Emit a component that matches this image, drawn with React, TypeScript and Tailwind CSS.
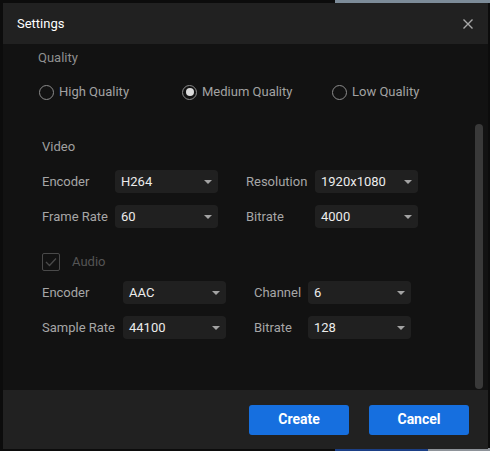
import React from "react";

const font = { fontFamily: "Roboto, 'Noto Sans', Arial, sans-serif" };

function Caret() {
  return (
    <svg width="8" height="4" viewBox="0 0 8 4" className="shrink-0">
      <path d="M0 0 L8 0 L4 4 Z" fill="#a3a3a3" />
    </svg>
  );
}

function Select({ value, w = "w-[103px]" }: { value: string; w?: string }) {
  return (
    <div className={`${w} h-[23px] rounded-[4px] bg-[#202020] flex items-center justify-between pl-[6px] pr-[6px] text-[13px] text-[#ececec]`}>
      <span>{value}</span>
      <Caret />
    </div>
  );
}

function Radio({ label, checked }: { label: string; checked?: boolean }) {
  return (
    <div className="flex items-center gap-[5px]">
      <div className="w-[15px] h-[15px] rounded-full border-[1.5px] border-[#8c8c8c] flex items-center justify-center">
        {checked && <div className="w-[8px] h-[8px] rounded-full bg-[#dcdcdc]" />}
      </div>
      <span className="text-[13px] text-[#a2a2a2]">{label}</span>
    </div>
  );
}

function Row({
  l1, v1, l2, v2, w1, w2,
}: { l1: string; v1: string; l2: string; v2: string; w1: string; w2: string }) {
  return (
    <div className="flex items-center">
      <span className={`${w1} text-[13px] text-[#a6a6a6]`}>{l1}</span>
      <Select value={v1} />
      <span className={`ml-[28px] ${w2} text-[13px] text-[#a6a6a6]`}>{l2}</span>
      <Select value={v2} />
    </div>
  );
}

export default function App() {
  return (
    <div className="relative w-[490px] h-[451px] bg-[#0c0c0c] overflow-hidden" style={font}>
      <div className="absolute left-[335px] top-0 w-[155px] h-[3px] bg-[#7d8c99]" />
      <div className="absolute left-[335px] bottom-0 w-[93px] h-[3px] bg-[#1b3f86]" />
      <div className="absolute left-[428px] bottom-0 w-[62px] h-[3px] bg-[#8e9399]" />
      <div className="relative ml-[3px] mt-[3px] w-[485px] h-[446px] flex flex-col bg-[#121212]">
        <div className="h-[41px] shrink-0 bg-[#212121] flex items-center justify-between pl-[14px] pr-[15px]">
          <span className="text-[13px] text-white">Settings</span>
          <svg width="10" height="10" viewBox="0 0 10 10">
            <path d="M0.5 0.5 L9.5 9.5 M9.5 0.5 L0.5 9.5" stroke="#a8a8a8" strokeWidth="1.4" />
          </svg>
        </div>
        <div className="relative flex-1 flex flex-col">
          <div className="h-[28px] flex items-center pl-[35px] text-[13px] text-[#8f8f8f]">Quality</div>
          <div className="h-[40px] flex items-center pl-[36px]">
            <div className="w-[143px]"><Radio label="High Quality" /></div>
            <div className="w-[150px]"><Radio label="Medium Quality" checked /></div>
            <Radio label="Low Quality" />
          </div>
          <div className="pl-[39px] flex flex-col">
            <div className="mt-[21px] h-[28px] flex items-center text-[13px] text-[#a0a0a0]">Video</div>
            <div className="mt-[9px]">
              <Row l1="Encoder" v1="H264" l2="Resolution" v2="1920x1080" w1="w-[73px]" w2="w-[69px]" />
            </div>
            <div className="mt-[12px]">
              <Row l1="Frame Rate" v1="60" l2="Bitrate" v2="4000" w1="w-[73px]" w2="w-[69px]" />
            </div>
            <div className="mt-[25px] h-[18px] flex items-center">
              <div className="w-[18px] h-[18px] rounded-[2px] border-[1.5px] border-[#4a4a4a] flex items-center justify-center">
                <svg width="12" height="10" viewBox="0 0 12 10">
                  <path d="M1 5 L4.5 8.5 L11 1.5" fill="none" stroke="#4a4a4a" strokeWidth="1.3" />
                </svg>
              </div>
              <span className="ml-[12px] text-[13px] text-[#555555]">Audio</span>
            </div>
            <div className="mt-[10px]">
              <Row l1="Encoder" v1="AAC" l2="Channel" v2="6" w1="w-[81px]" w2="w-[54px]" />
            </div>
            <div className="mt-[12px]">
              <Row l1="Sample Rate" v1="44100" l2="Bitrate" v2="128" w1="w-[81px]" w2="w-[54px]" />
            </div>
          </div>
          <div className="absolute right-[5px] top-[80px] bottom-[1px] w-[8px] rounded-full bg-[#393939]" />
        </div>
        <div className="h-[59px] shrink-0 bg-[#212121] flex items-center justify-end gap-[20px] pr-[19px]">
          <button className="w-[100px] h-[30px] rounded-[3px] bg-[#166fdf] text-white text-[14px] font-bold">Create</button>
          <button className="w-[100px] h-[30px] rounded-[3px] bg-[#166fdf] text-white text-[14px] font-bold">Cancel</button>
        </div>
      </div>
    </div>
  );
}
